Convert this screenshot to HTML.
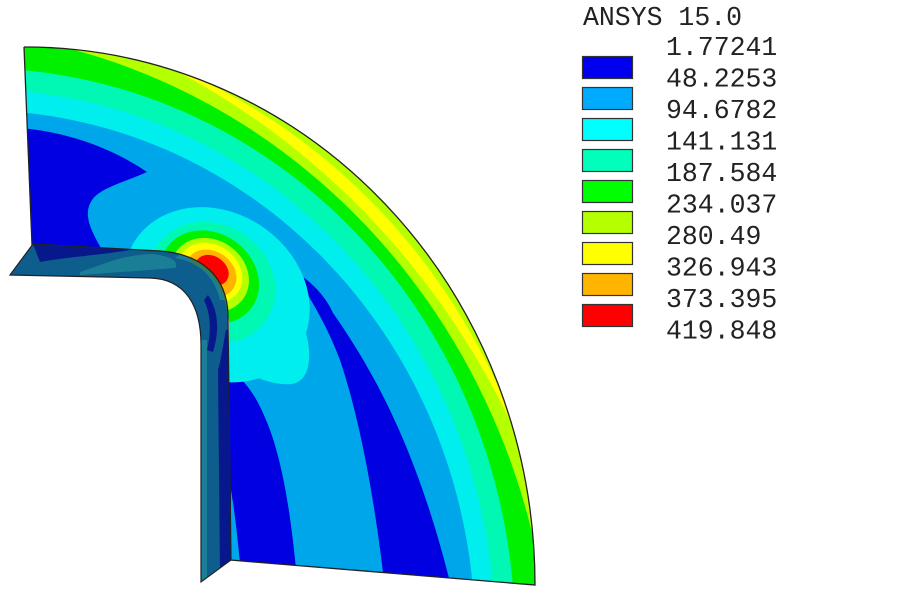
<!DOCTYPE html>
<html><head><meta charset="utf-8"><style>
html,body{margin:0;padding:0;background:#fff;width:903px;height:589px;overflow:hidden}
svg{display:block;overflow:hidden}
.t{font-family:"Liberation Mono",monospace;font-size:26.5px;fill:#222}
</style></head><body>
<svg width="903" height="589" viewBox="0 0 903 589" xmlns="http://www.w3.org/2000/svg">
<defs>
<clipPath id="plate"><path d="M24,47 A510,538 0 0 1 535,585 L229,560 L229,320 C227,275 200,254 160,251 L32,245 Z"/></clipPath>
<clipPath id="fl"><path d="M10,275 L33,244 L160,251 C200,254 227,275 228,315 L231,560 L201,582 L201,345 C201,305 185,279 150,278 Z"/></clipPath>
</defs>
<g clip-path="url(#plate)">
 <g transform="translate(25,585) scale(1,1.055)">
  <rect x="-100" y="-600" width="700" height="700" fill="#b4ff00"/>
  <circle cx="-73.5" cy="73.5" r="606" fill="#ffff00"/>
  <circle cx="-183.8" cy="183.8" r="750" fill="#b4ff00"/>
  <circle cx="-108.9" cy="108.9" r="636" fill="#00f000"/>
  <circle cx="-48.3" cy="48.3" r="538.3" fill="#00f8b4"/>
  <circle cx="-48.3" cy="48.3" r="518.3" fill="#00eeee"/>
  <circle cx="-48.3" cy="48.3" r="498.3" fill="#00a6ea"/>
 </g>
 <path d="M20,128 C70,132 115,150 147,172 C125,182 100,188 92,200 C82,215 92,232 102,250 L20,250 Z" fill="#0000e0"/>
 <path d="M292,270 C310,280 325,295 333,313 C380,380 420,460 452,590 L385,590 C375,500 360,420 340,360 C325,320 305,290 292,270 Z" fill="#0000e0"/>
 <path d="M228,368 C245,380 255,395 263,413 C280,450 290,500 298,590 L228,590 Z" fill="#0000e0"/>
 <g transform="rotate(35 215 285)">
  <ellipse cx="222" cy="292" rx="98" ry="82" fill="#00eeee"/>
 </g>
 <path d="M229,330 L229,362 C250,376 272,386 292,384 C310,381 313,355 305,330 Z" fill="#00eeee"/>
 <g transform="rotate(35 210 280)">
  <ellipse cx="213" cy="281" rx="66" ry="58" fill="#00f8b4"/>
  <ellipse cx="208" cy="278" rx="52" ry="44" fill="#00f000"/>
  <ellipse cx="207" cy="276" rx="41" ry="35" fill="#b4ff00"/>
  <ellipse cx="206" cy="274" rx="34" ry="28" fill="#ffff00"/>
  <ellipse cx="207" cy="274" rx="27" ry="22" fill="#ffb400"/>
  <ellipse cx="206" cy="271" rx="18" ry="14" fill="#ff0000"/>
 </g>
 <path d="M231,490 C236,520 238,545 240,562 L231,561 Z" fill="#00a6ea"/>
</g>
<path d="M24,47 A510,538 0 0 1 535,585 L230,560" fill="none" stroke="#222" stroke-width="1.3"/>
<path d="M24,47 L32,245" fill="none" stroke="#222" stroke-width="1.3"/>
<g clip-path="url(#fl)">
 <rect x="0" y="240" width="240" height="350" fill="#0d5e8c"/>
 <path d="M33,244 L130,250 C100,255 60,258 40,262 Z" fill="#06188c"/>
 <path d="M80,272 C110,262 120,256 150,254 C170,255 180,262 175,268 C150,270 120,272 80,275 Z" fill="#1a7f96"/>
 <path d="M175,258 C200,262 215,278 220,300 L226,300 C222,275 205,258 180,254 Z" fill="#1a7f96"/>
 <path d="M208,295 C218,310 220,330 213,352 L207,350 C212,330 210,312 204,300 Z" fill="#06188c"/>
 <path d="M201,340 L207,340 L207,582 L201,582 Z" fill="#1a7f96"/>
 <path d="M218,370 C221,360 224,340 226,330 L230,330 L232,575 L220,575 Z" fill="#06188c"/>
 <path d="M190,262 C210,270 222,285 227,310 L229,310 C226,280 212,262 192,256 Z" fill="#3a7a50"/>
</g>
<path d="M10,275 L33,244 L160,251 C200,254 227,275 228,315 L231,560 L201,582 L201,345 C201,305 185,279 150,278 Z" fill="none" stroke="#222" stroke-width="1.2"/>
<text class="t" x="583" y="25">ANSYS 15.0</text>
<g stroke="#333" stroke-width="1.2">
 <rect x="582.5" y="56.5" width="50" height="22" fill="#0000ee"/>
 <rect x="582.5" y="87.5" width="50" height="22" fill="#00aaff"/>
 <rect x="582.5" y="118.5" width="50" height="22" fill="#00ffff"/>
 <rect x="582.5" y="149.5" width="50" height="22" fill="#00ffbb"/>
 <rect x="582.5" y="180.5" width="50" height="22" fill="#00ff00"/>
 <rect x="582.5" y="211.5" width="50" height="22" fill="#b4ff00"/>
 <rect x="582.5" y="242.5" width="50" height="22" fill="#ffff00"/>
 <rect x="582.5" y="273.5" width="50" height="22" fill="#ffb400"/>
 <rect x="582.5" y="304.5" width="50" height="22" fill="#ff0000"/>
</g>
<text class="t" x="666" y="55">1.77241</text>
<text class="t" x="666" y="86.5">48.2253</text>
<text class="t" x="666" y="118">94.6782</text>
<text class="t" x="666" y="149.5">141.131</text>
<text class="t" x="666" y="181">187.584</text>
<text class="t" x="666" y="212.5">234.037</text>
<text class="t" x="666" y="244">280.49</text>
<text class="t" x="666" y="275.5">326.943</text>
<text class="t" x="666" y="307">373.395</text>
<text class="t" x="666" y="338.5">419.848</text>
</svg>
</body></html>
